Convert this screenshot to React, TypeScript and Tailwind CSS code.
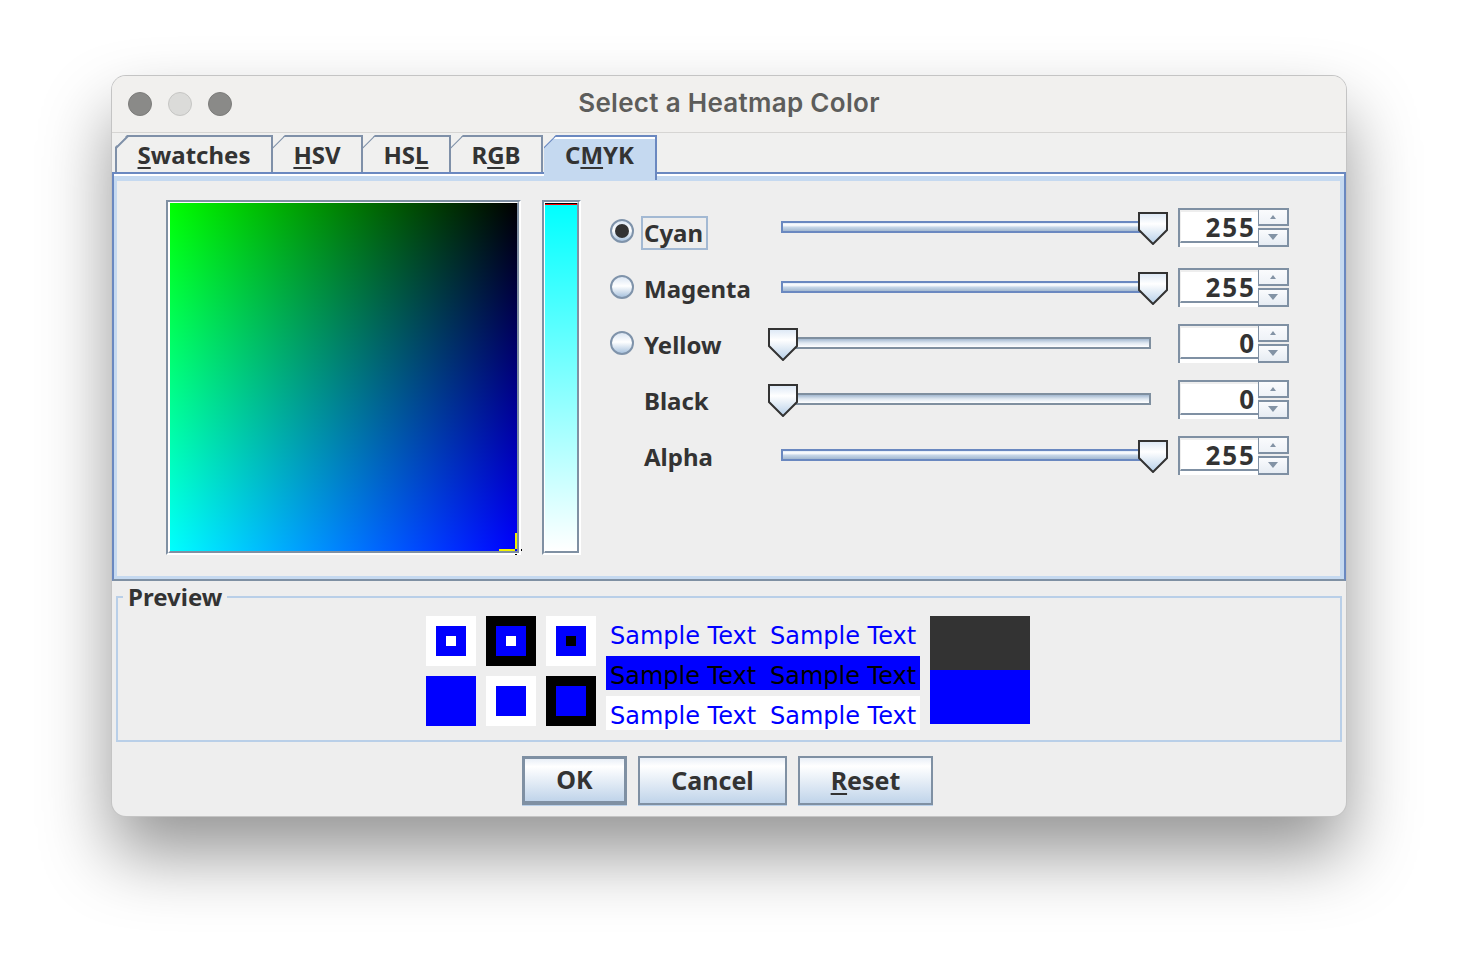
const UI_FONT = "[font-family:'Noto_Sans',sans-serif]";
const SAMPLE_FONT = "[font-family:'DejaVu_Sans',sans-serif]";

function Tab({ label, underline, width, first, active }: { label: string; underline: number; width: number; first?: boolean; active?: boolean }) {
  const color = active ? "border-[#6a88c0]" : "border-[#7f90a8]";
  return (
    <div
      style={{ width }}
      className={`relative shrink-0 ${active ? "-mb-[8px] h-[45px] bg-[#c5d9f0] z-10" : "h-[37px]"} ${first ? "border-l-2" : ""} border-t-2 border-r-2 ${color} [clip-path:polygon(12px_0,100%_0,100%_100%,0_100%,0_12px)]`}
    >
      {active && <div className="h-[2px] bg-white" />}
      <svg className="absolute left-[-2px] top-[-2px]" width="14" height="14">
        <line x1="0.5" y1="13.5" x2="13.5" y2="0.5" stroke={active ? "#6a88c0" : "#7f90a8"} strokeWidth="2" />
      </svg>
      <div className={`flex justify-center ${active ? "pt-[1px]" : "pt-[3px]"} text-[24px] leading-[30px] font-bold text-[#333]`}>
        <span>
          {label.slice(0, underline)}
          <span className="underline decoration-2 underline-offset-[3px]">{label[underline]}</span>
          {label.slice(underline + 1)}
        </span>
      </div>
    </div>
  );
}

function Radio({ checked }: { checked?: boolean }) {
  return (
    <div className="flex h-[24px] w-[24px] items-center justify-center rounded-full border-2 border-[#7f93aa] bg-[linear-gradient(to_bottom,#dbe6f3,#ffffff_45%,#a9c3de)]">
      {checked && <div className="h-[14px] w-[14px] rounded-full bg-[#333]" />}
    </div>
  );
}

function Thumb({ at }: { at: number }) {
  return (
    <svg className="absolute top-[1px]" style={{ left: at }} width="30" height="33" viewBox="0 0 30 33">
      <defs>
        <linearGradient id="thumbFill" x1="0" y1="0" x2="0" y2="1">
          <stop offset="0" stopColor="#dbe7f5" />
          <stop offset="0.35" stopColor="#ffffff" />
          <stop offset="1" stopColor="#b6cfe8" />
        </linearGradient>
      </defs>
      <polygon points="1,1 29,1 29,18 15,32 1,18" fill="url(#thumbFill)" stroke="#333" strokeWidth="2" />
    </svg>
  );
}

function Slider({ max }: { max?: boolean }) {
  return (
    <div className="relative flex h-[32px] w-[400px] shrink-0 items-center pl-[13px] pr-[17px]">
      {max ? (
        <div className="h-[12px] w-full border-2 border-[#6a88c0] bg-[linear-gradient(to_bottom,#dfe9f5,#ffffff_25%,#c5d5e7_55%,#a3b8d0)]" />
      ) : (
        <div className="h-[12px] w-full border-2 border-[#7f8f9f] bg-[linear-gradient(to_bottom,#a3b8d0,#dfe8f1_50%,#ffffff)]" />
      )}
      <Thumb at={max ? 370 : 0} />
    </div>
  );
}

function SpinArrow({ down }: { down?: boolean }) {
  return (
    <div className="flex h-full items-center justify-center">
      <svg width="10" height="6" viewBox="0 0 10 6">
        <polygon points={down ? "0,0 10,0 5,6" : "2,5 8,5 5,1"} fill="#8393a5" />
      </svg>
    </div>
  );
}

function Spinner({ value }: { value: number }) {
  return (
    <div className="ml-[10px] flex h-[39px] w-[111px] shrink-0">
      <div className="h-[39px] w-[80px] border-t-2 border-l-2 border-[#7f90a3] bg-white">
        <div className="h-[33px] border-t-2 border-l border-b-2 border-t-[#eeeeee] border-l-[#eeeeee] border-b-[#7f90a3] pr-[2px] text-right text-[26px] leading-[30px] font-bold tracking-[2px] text-[#333]">
          {value}
        </div>
      </div>
      <div className="flex w-[31px] flex-col justify-between">
        <div className="h-[18px] border-t-2 border-l border-r-2 border-b-2 border-[#7f90a3] bg-[linear-gradient(to_bottom,#fafbfd,#eef2f7)]">
          <SpinArrow />
        </div>
        <div className="h-[19px] border-t-2 border-l border-r-2 border-b-2 border-[#7f90a3] bg-[linear-gradient(to_bottom,#fafbfd,#e6ecf3)]">
          <SpinArrow down />
        </div>
      </div>
    </div>
  );
}

function ColorRow({ label, radio, checked, max, raised }: { label: string; radio?: boolean; checked?: boolean; max?: boolean; raised?: boolean }) {
  const value = max ? 255 : 0;
  return (
    <div className="flex h-[56px] items-center">
      <div className="w-[24px] shrink-0">{radio && <Radio checked={checked} />}</div>
      <div className="ml-[7px] w-[127px] shrink-0 pt-[4px]">
        <span className={`inline-block border-2 pr-[3px] pl-[1px] text-[24px] leading-[30px] font-bold text-[#333] ${checked ? "border-[#a3b9d3]" : "border-transparent"}`}>
          {label}
        </span>
      </div>
      <div className={`flex items-center ${raised ? "mb-[8px]" : ""}`}>
        <Slider max={max} />
        <Spinner value={value} />
      </div>
    </div>
  );
}

function GradientSquare() {
  return (
    <div className="relative h-[355px] w-[355px] shrink-0 border-t-2 border-r-2 border-b-2 border-l-2 border-t-[#7f90a3] border-l-[#7f90a3] border-r-white border-b-white">
      <div className="h-[351px] w-[351px] border-t border-l-2 border-r-2 border-b-2 border-t-white border-l-white border-r-[#7f90a3] border-b-[#7f90a3]">
        <div className="h-[348px] w-[347px] bg-[linear-gradient(to_right,#00ff00,#000000),linear-gradient(to_bottom,#000000,#0000ff)] bg-blend-screen" />
      </div>
      <div className="absolute left-[347px] top-[331px] h-[16px] w-[2px] bg-[#f2f200]" />
      <div className="absolute left-[331px] top-[347px] h-[2px] w-[16px] bg-[#f2f200]" />
      <div className="absolute left-[353px] top-[347px] h-[2px] w-[1px] bg-black" />
      <div className="absolute left-[347px] top-[352px] h-[1px] w-[2px] bg-black" />
    </div>
  );
}

function HueStrip() {
  return (
    <div className="ml-[21px] h-[355px] w-[39px] shrink-0 border-t-2 border-l-2 border-r-2 border-b-2 border-t-[#7f90a3] border-l-[#7f90a3] border-r-white border-b-white">
      <div className="h-[351px] border-t border-l border-r-2 border-b-2 border-t-white border-l-white border-r-[#7f90a3] border-b-[#7f90a3]">
        <div className="h-[1px] bg-black" />
        <div className="h-[1px] bg-[#ff0000]" />
        <div className="h-[346px] bg-[linear-gradient(to_bottom,#00ffff,#ffffff)]" />
      </div>
    </div>
  );
}

function Swatch({ outer, mid, inner }: { outer: string; mid: string; inner?: string }) {
  return (
    <div className={`flex h-[50px] w-[50px] items-center justify-center ${outer}`}>
      <div className={`flex h-[30px] w-[30px] items-center justify-center ${mid}`}>
        {inner && <div className={`h-[10px] w-[10px] ${inner}`} />}
      </div>
    </div>
  );
}

function SampleRow({ bg, text }: { bg: string; text: string }) {
  return (
    <div className={`flex h-[34px] items-center gap-[15px] px-[4px] pt-[6px] text-[24px] leading-[28px] whitespace-nowrap ${SAMPLE_FONT} ${bg} ${text}`}>
      <span className="w-[145px]">Sample Text</span>
      <span className="w-[146px]">Sample Text</span>
    </div>
  );
}

function Preview() {
  return (
    <div className="relative mx-[4px] mt-[15px] h-[146px] border-2 border-[#b9cfe8]">
      <div className="absolute -top-[14px] left-[5px] bg-[#eeeeee] px-[5px] text-[24px] leading-[26px] font-bold text-[#333]">Preview</div>
      <div className="flex items-start pt-[18px] pl-[308px]">
        <div className="grid grid-cols-3 gap-[10px]">
          <Swatch outer="bg-white" mid="bg-[#0000ff]" inner="bg-white" />
          <Swatch outer="bg-black" mid="bg-[#0000ff]" inner="bg-white" />
          <Swatch outer="bg-white" mid="bg-[#0000ff]" inner="bg-black" />
          <Swatch outer="bg-[#0000ff]" mid="bg-[#0000ff]" />
          <Swatch outer="bg-white" mid="bg-[#0000ff]" />
          <Swatch outer="bg-black" mid="bg-[#0000ff]" />
        </div>
        <div className="ml-[10px] flex w-[314px] flex-col gap-[6px]">
          <SampleRow bg="" text="text-[#0000ff]" />
          <SampleRow bg="bg-[#0000ff]" text="text-black" />
          <SampleRow bg="bg-white" text="text-[#0000ff]" />
        </div>
        <div className="ml-[10px] w-[100px]">
          <div className="h-[54px] bg-[#333333]" />
          <div className="h-[54px] bg-[#0000ff]" />
        </div>
      </div>
    </div>
  );
}

function DialogButton({ children, width, main }: { children: React.ReactNode; width: number; main?: boolean }) {
  return (
    <button
      style={{ width }}
      className={`h-[49px] ${main ? "border-[3px] border-b-4" : "border-2"} border-[#7f90a3] bg-[linear-gradient(to_bottom,#e9eff7,#ffffff_18%,#c0d4ea)] text-[25px] font-bold text-[#333] shadow-[0_1px_0_#b9cfe8]`}
    >
      {children}
    </button>
  );
}

export default function App() {
  return (
    <div className={`h-[964px] w-[1458px] overflow-hidden bg-white pt-[76px] pl-[112px] ${UI_FONT}`}>
      <div className="h-[740px] w-[1234px] overflow-hidden rounded-[14px] bg-[#eeeeee] shadow-[0_0_0_1px_#c4c4c4,0_38px_70px_rgba(0,0,0,0.42)]">
        <div className="relative flex h-[57px] items-center justify-center border-b border-[#d6d5d3] bg-[#f1f0ee]">
          <div className="absolute left-[16px] flex gap-[16px]">
            <div className="h-[24px] w-[24px] rounded-full border border-[#7c7c7a] bg-[#8a8a88]" />
            <div className="h-[24px] w-[24px] rounded-full border border-[#c6c6c4] bg-[#dbdbd9]" />
            <div className="h-[24px] w-[24px] rounded-full border border-[#7c7c7a] bg-[#8a8a88]" />
          </div>
          <div className="pb-[4px] [font-family:Inter,sans-serif] text-[26px] font-semibold tracking-[0.3px] text-[#5d5d5b]">Select a Heatmap Color</div>
        </div>

        <div className="flex h-[39px] items-end bg-[#f0f0ef] pl-[3px]">
          <Tab label="Swatches" underline={0} width={158} first />
          <Tab label="HSV" underline={0} width={90} />
          <Tab label="HSL" underline={2} width={88} />
          <Tab label="RGB" underline={1} width={92} />
          <div className="w-[1px]" />
          <Tab label="CMYK" underline={1} width={113} active />
        </div>

        <div className="h-[409px] border-t-2 border-r-2 border-l-2 border-b-2 border-t-[#6a88c0] border-r-[#6a88c0] border-l-[#6a88c0] border-b-[#7f90a3] bg-white pt-[2px]">
          <div className="h-[403px] border-t-[5px] border-r-4 border-b-[3px] border-l-[3px] border-[#c5d9f0] bg-[#eeeeee] pt-[19px] pl-[49px]">
            <div className="flex">
              <GradientSquare />
              <HueStrip />
              <div className="ml-[29px] mt-[3px] flex flex-col">
                <ColorRow label="Cyan" radio checked max raised />
                <ColorRow label="Magenta" radio max />
                <ColorRow label="Yellow" radio />
                <ColorRow label="Black" />
                <ColorRow label="Alpha" max />
              </div>
            </div>
          </div>
        </div>

        <Preview />

        <div className="mt-[14px] flex gap-[11px] pl-[410px]">
          <DialogButton width={105} main>OK</DialogButton>
          <DialogButton width={149}>Cancel</DialogButton>
          <DialogButton width={135}>
            <span className="underline decoration-2 underline-offset-[3px]">R</span>eset
          </DialogButton>
        </div>
      </div>
    </div>
  );
}
